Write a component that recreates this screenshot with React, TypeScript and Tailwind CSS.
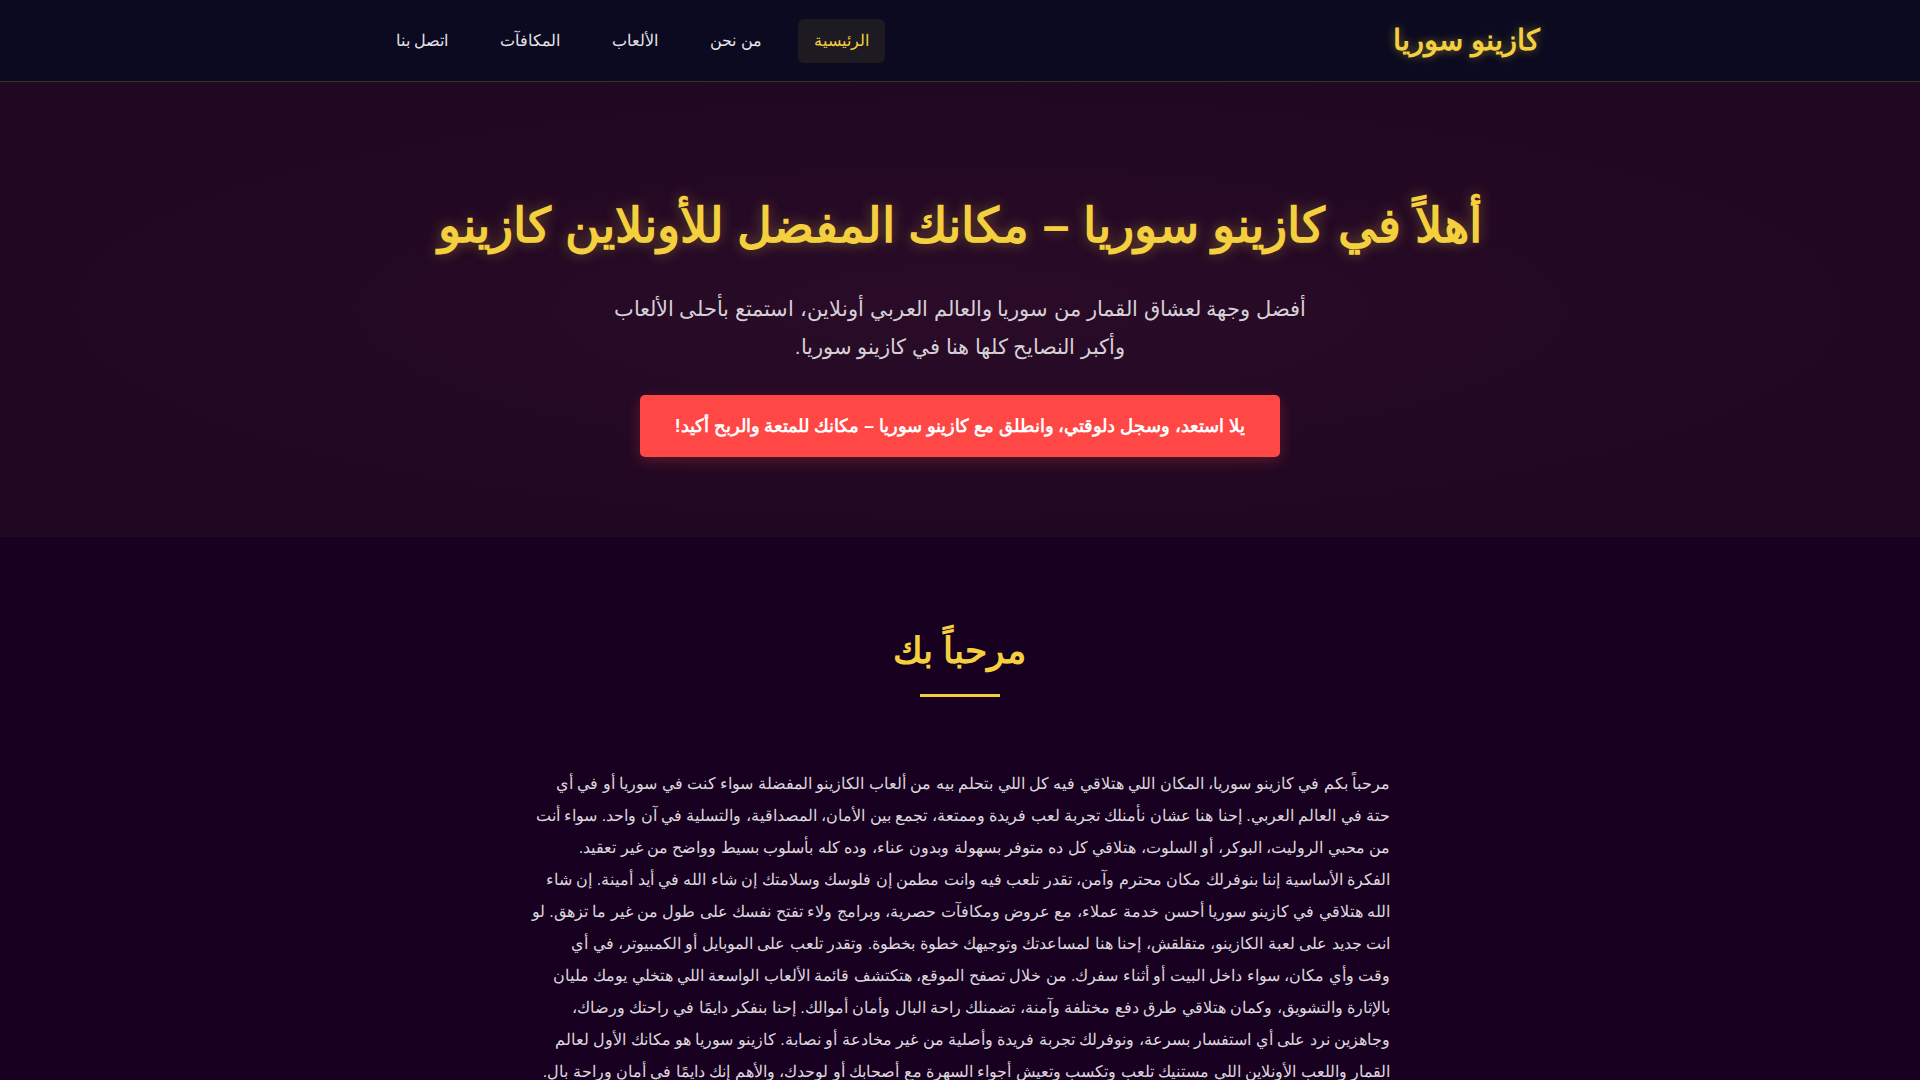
import React from "react";

const navItems = [
  { name: "الرئيسية", active: true },
  { name: "من نحن" },
  { name: "الألعاب" },
  { name: "المكافآت" },
  { name: "اتصل بنا" },
];

const introFirst =
  "مرحباً بكم في كازينو سوريا، المكان اللي هتلاقي فيه كل اللي بتحلم بيه من ألعاب الكازينو المفضلة سواء كنت في سوريا أو في أي حتة في العالم العربي. إحنا هنا عشان نأمنلك تجربة لعب فريدة وممتعة، تجمع بين الأمان، المصداقية، والتسلية في آن واحد. سواء أنت من محبي الروليت، البوكر، أو السلوت، هتلاقي كل ده متوفر بسهولة وبدون عناء، وده كله بأسلوب بسيط وواضح من غير تعقيد.";

const introSecondA =
  "الفكرة الأساسية إننا بنوفرلك مكان محترم وآمن، تقدر تلعب فيه وانت مطمن إن فلوسك وسلامتك إن شاء الله في أيد أمينة. إن شاء الله هتلاقي في كازينو سوريا أحسن خدمة عملاء، مع عروض ومكافآت حصرية، وبرامج ولاء تفتح نفسك على طول من غير ما تزهق. لو انت جديد على لعبة الكازينو، متقلقش، إحنا هنا لمساعدتك وتوجيهك خطوة بخطوة. وتقدر تلعب على الموبايل أو الكمبيوتر، في أي";

const introSecondB =
  "وقت وأي مكان، سواء داخل البيت أو أثناء سفرك. من خلال تصفح الموقع، هتكتشف قائمة الألعاب الواسعة اللي هتخلي يومك مليان بالإثارة والتشويق، وكمان هتلاقي طرق دفع مختلفة وآمنة، تضمنلك راحة البال وأمان أموالك. إحنا بنفكر دايمًا في راحتك ورضاك، وجاهزين نرد على أي استفسار بسرعة، ونوفرلك تجربة فريدة وأصلية من غير مخادعة أو نصابة. كازينو سوريا هو مكانك الأول لعالم القمار واللعب الأونلاين اللي مستنيك تلعب وتكسب وتعيش أجواء السهرة مع أصحابك أو لوحدك، والأهم إنك دايمًا في أمان وراحة بال.";

export default function App() {
  return (
    <div dir="rtl" className="min-h-screen bg-[#180020] font-['Segoe_UI',Tahoma,Geneva,Verdana,sans-serif] text-[#e0dce0]">
      {/* Header */}
      <header className="h-[82px] bg-[#0b0a20] border-b border-[#3a3222]">
        <div className="mx-auto flex h-full max-w-[1200px] items-center justify-between px-5">
          <div className="text-[28.8px] font-bold text-[#f4d03f] [text-shadow:0_0_10px_rgba(244,208,63,0.45)]">
            كازينو سوريا
          </div>
          <nav className="flex items-center gap-5">
            {navItems.map((item) => (
              <a
                key={item.name}
                href="#"
                className={
                  item.active
                    ? "rounded-md bg-[#1e1a22] px-4 py-[11px] text-[16px] leading-[22px] text-[#f4d03f]"
                    : "rounded-md px-4 py-[11px] text-[16px] leading-[22px] text-[#e6e2e6]"
                }
              >
                {item.name}
              </a>
            ))}
          </nav>
        </div>
      </header>

      {/* Hero */}
      <section className="bg-[#200722] bg-[radial-gradient(ellipse_at_center,rgba(60,20,50,0.35),transparent_75%)] pt-[115px] pb-[80px] text-center">
        <h1 className="text-[48px] font-bold leading-[1.2] text-[#f4d03f] [text-shadow:0_0_14px_rgba(244,208,63,0.35)]">
          أهلاً في كازينو سوريا – مكانك المفضل للأونلاين كازينو
        </h1>
        <p className="mx-auto mt-[35px] max-w-[700px] text-[20.8px] leading-[38px] text-[#d6d0d6]">
          أفضل وجهة لعشاق القمار من سوريا والعالم العربي أونلاين، استمتع بأحلى الألعاب وأكبر النصايح كلها هنا في كازينو سوريا.
        </p>
        <a
          href="#"
          className="mt-[29px] inline-block rounded-[5px] bg-[#ff4845] px-[35px] py-[18px] text-[17.6px] font-bold leading-[26px] text-white shadow-[0_4px_14px_rgba(255,72,69,0.25)]"
        >
          يلا استعد، وسجل دلوقتي، وانطلق مع كازينو سوريا – مكانك للمتعة والربح أكيد!
        </a>
      </section>

      {/* Welcome */}
      <section className="pt-[92px] pb-[80px]">
        <div className="mx-auto max-w-[900px] px-5">
          <h2 className="text-center text-[36px] font-bold leading-[1.2] text-[#f4d03f]">مرحباً بك</h2>
          <div className="mx-auto mt-[22px] h-[3px] w-[80px] bg-[#f4d03f]" />
          <div className="mt-[71px] text-right text-[16px] leading-[32px] text-[#ddd6dd]">
            <p>{introFirst}</p>
            <p>
              {introSecondA}
              <br />
              {introSecondB}
            </p>
          </div>
        </div>
      </section>
    </div>
  );
}
